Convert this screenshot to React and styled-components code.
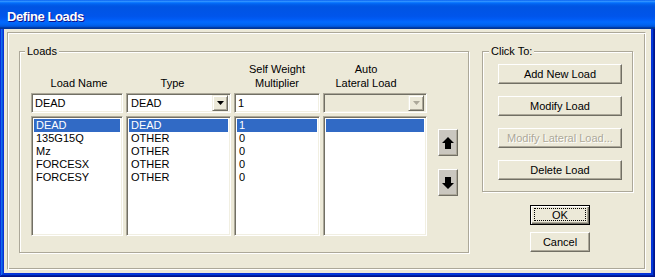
import React from 'react';
import styled, { createGlobalStyle } from 'styled-components';

const Global = createGlobalStyle`
  html, body { margin: 0; padding: 0; background: #fff; }
  body { font-family: "Liberation Sans", Arial, sans-serif; font-size: 11px; color: #000; }
  * { box-sizing: border-box; }
`;

const FACE = '#ECE9D8';
const SHADOW = '#ACA899';
const DARK = '#716F64';
const LIGHT = '#F1EFE2';

const Window = styled.div`
  width: 655px;
  height: 277px;
  display: flex;
  flex-direction: column;
  background: #0831d9;
  box-shadow: inset -1px -1px #00138c, inset 1px 1px #0831d9, inset -2px -2px #001ea0,
    inset 2px 2px #166aee, inset -3px -3px #003bda, inset 3px 3px #0855dd;
  overflow: hidden;
`;

const TitleBar = styled.div`
  height: 29px;
  flex: none;
  display: flex;
  align-items: center;
  padding: 4px 0 0 7px;
  background: linear-gradient(180deg, #0058ee 0%, #3593ff 4%, #288eff 6%, #127dff 8%,
    #036ffc 10%, #0262ee 14%, #0057e5 20%, #0054e3 24%, #0055eb 56%, #005bf5 66%,
    #026afe 76%, #0062ef 86%, #0052d6 92%, #0040ab 94%, #003092 100%);
  color: #fff;
  font: bold 13px "Liberation Sans", Arial, sans-serif;
  letter-spacing: -0.4px;
  text-shadow: 1px 1px #0f1089;
`;

const Client = styled.div`
  flex: 1;
  margin: 0 4px 4px 4px;
  background: ${FACE};
  display: flex;
  padding: 3px 5px 3px 3px;
`;

const Panel = styled.div`
  flex: 1;
  display: flex;
  align-items: flex-start;
  gap: 13px;
  padding: 18px 0 0 11px;
  border: 1px solid;
  border-color: ${SHADOW} #fff #fff ${SHADOW};
  box-shadow: inset 1px 1px #fff, inset -1px -1px ${SHADOW};
`;

const Group = styled.div`
  position: relative;
  border: 1px solid ${SHADOW};
  box-shadow: inset 1px 1px #fff, 1px 1px 0 #fff;
  padding: ${(p) => p.$pad};
`;

const GroupLabel = styled.span`
  position: absolute;
  top: -7px;
  left: ${(p) => p.$left}px;
  padding: 0 2px;
  line-height: 13px;
  background: ${FACE};
`;

const LoadsGrid = styled.div`
  display: grid;
  grid-template-columns: 92px 105px 86px 104px 28px;
  grid-template-rows: 30px 20px 120px;
  column-gap: 3px;
  row-gap: 3px;
`;

const Header = styled.div`
  align-self: end;
  text-align: center;
  line-height: 14px;
  padding-left: ${(p) => (p.$shift > 0 ? p.$shift * 2 : 0)}px;
  padding-right: ${(p) => (p.$shift < 0 ? -p.$shift * 2 : 0)}px;
  white-space: nowrap;
`;

const Sunken = styled.div`
  border: 1px solid;
  border-color: ${SHADOW} #fff #fff ${SHADOW};
  box-shadow: inset 1px 1px ${DARK}, inset -1px -1px ${LIGHT};
  background: ${(p) => (p.$disabled ? FACE : '#fff')};
  padding: 2px;
`;

const TextBox = styled(Sunken)`
  display: flex;
  align-items: center;
  padding: 2px 2px 2px 3px;
  line-height: 16px;
  white-space: nowrap;
`;

const Combo = styled(Sunken)`
  display: flex;
  align-items: center;
`;

const ComboText = styled.div`
  flex: 1;
  padding-left: 2px;
  line-height: 16px;
  white-space: nowrap;
`;

const DropButton = styled.div`
  width: 16px;
  height: 16px;
  flex: none;
  display: flex;
  align-items: center;
  justify-content: center;
  background: ${FACE};
  border: 1px solid;
  border-color: ${LIGHT} ${DARK} ${DARK} ${LIGHT};
  box-shadow: inset 1px 1px #fff, inset -1px -1px ${SHADOW};
  color: ${(p) => (p.$disabled ? SHADOW : '#000')};
`;

const ListBox = styled(Sunken)`
  padding: 2px 2px;
  overflow: hidden;
`;

const Row = styled.div`
  height: 13px;
  line-height: 13px;
  padding-left: 2px;
  white-space: nowrap;
  background: ${(p) => (p.$selected ? '#316AC5' : 'transparent')};
  color: ${(p) => (p.$selected ? '#fff' : '#000')};
`;

const ArrowColumn = styled.div`
  padding: 13px 0 0 8px;
  display: flex;
  flex-direction: column;
  gap: 13px;
`;

const ArrowButton = styled.div`
  width: 20px;
  height: 27px;
  display: flex;
  align-items: center;
  justify-content: center;
  background: #cac7bf;
  border: 1px solid;
  border-color: #fff ${DARK} ${DARK} #fff;
  box-shadow: inset -1px -1px ${SHADOW};
`;

const RightColumn = styled.div`
  display: flex;
  flex-direction: column;
`;

const ButtonStack = styled.div`
  display: flex;
  flex-direction: column;
  gap: 12px;
`;

const Button = styled.div`
  width: ${(p) => p.$w}px;
  height: 20px;
  display: flex;
  align-items: center;
  justify-content: center;
  background: ${FACE};
  border: 1px solid;
  border-color: ${(p) => (p.$default ? '#000' : `#fff ${DARK} ${DARK} #fff`)};
  box-shadow: ${(p) =>
    p.$default
      ? `inset 1px 1px #fff, inset -1px -1px ${DARK}, inset -2px -2px ${SHADOW}`
      : `inset -1px -1px ${SHADOW}`};
  color: ${(p) => (p.$disabled ? SHADOW : '#000')};
  text-shadow: ${(p) => (p.$disabled ? '1px 1px #fff' : 'none')};
  padding: ${(p) => (p.$default ? '2px 3px 3px 3px' : '0')};
  margin-left: ${(p) => p.$ml || 0}px;
  margin-top: ${(p) => p.$mt || 0}px;
  white-space: nowrap;
`;

const FocusRect = styled.div`
  flex: 1;
  align-self: stretch;
  display: flex;
  align-items: center;
  justify-content: center;
  border: 1px dotted #000;
`;

const SmallArrow = () => (
  <svg width="7" height="4" viewBox="0 0 7 4">
    <polygon points="0,0 7,0 3.5,4" fill="currentColor" />
  </svg>
);

const BigArrow = ({ down }) => (
  <svg width="12" height="12" viewBox="0 0 12 12">
    <polygon
      points={down ? '3,0 9,0 9,6 12,6 6,12 0,6 3,6' : '6,0 12,6 9,6 9,12 3,12 3,6 0,6'}
      fill="#000"
    />
  </svg>
);

const loads = [
  { name: 'DEAD', type: 'DEAD', mult: '1' },
  { name: '135G15Q', type: 'OTHER', mult: '0' },
  { name: 'Mz', type: 'OTHER', mult: '0' },
  { name: 'FORCESX', type: 'OTHER', mult: '0' },
  { name: 'FORCESY', type: 'OTHER', mult: '0' },
];

export default function App() {
  return (
    <>
      <Global />
      <Window>
        <TitleBar>Define Loads</TitleBar>
        <Client>
          <Panel>
            <Group $pad="8px 10px 16px 11px">
              <GroupLabel $left={5}>Loads</GroupLabel>
              <LoadsGrid>
                <Header $shift={2}>Load Name</Header>
                <Header $shift={-6}>Type</Header>
                <Header $shift={0}>
                  Self Weight
                  <br />
                  Multiplier
                </Header>
                <Header $shift={-9}>
                  Auto
                  <br />
                  Lateral Load
                </Header>
                <div />

                <TextBox>DEAD</TextBox>
                <Combo>
                  <ComboText>DEAD</ComboText>
                  <DropButton>
                    <SmallArrow />
                  </DropButton>
                </Combo>
                <TextBox>1</TextBox>
                <Combo $disabled>
                  <ComboText />
                  <DropButton $disabled>
                    <SmallArrow />
                  </DropButton>
                </Combo>
                <div />

                <ListBox>
                  {loads.map((l, i) => (
                    <Row key={l.name} $selected={i === 0}>{l.name}</Row>
                  ))}
                </ListBox>
                <ListBox>
                  {loads.map((l, i) => (
                    <Row key={l.name} $selected={i === 0}>{l.type}</Row>
                  ))}
                </ListBox>
                <ListBox>
                  {loads.map((l, i) => (
                    <Row key={l.name} $selected={i === 0}>{l.mult}</Row>
                  ))}
                </ListBox>
                <ListBox>
                  <Row $selected />
                </ListBox>
                <ArrowColumn>
                  <ArrowButton>
                    <BigArrow />
                  </ArrowButton>
                  <ArrowButton>
                    <BigArrow down />
                  </ArrowButton>
                </ArrowColumn>
              </LoadsGrid>
            </Group>

            <RightColumn>
              <Group $pad="12px 10px 11px 15px">
                <GroupLabel $left={6}>Click To:</GroupLabel>
                <ButtonStack>
                  <Button $w={124}>Add New Load</Button>
                  <Button $w={124}>Modify Load</Button>
                  <Button $w={124} $disabled>Modify Lateral Load...</Button>
                  <Button $w={124}>Delete Load</Button>
                </ButtonStack>
              </Group>
              <Button $w={60} $default $ml={48} $mt={13}>
                <FocusRect>OK</FocusRect>
              </Button>
              <Button $w={60} $ml={48} $mt={7}>Cancel</Button>
            </RightColumn>
          </Panel>
        </Client>
      </Window>
    </>
  );
}
